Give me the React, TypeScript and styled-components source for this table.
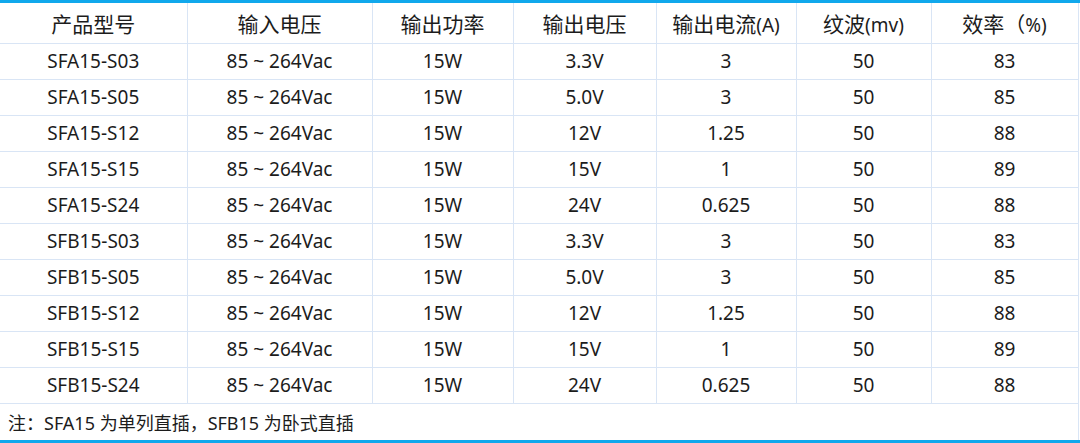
import React from "react";
import styled, { createGlobalStyle } from "styled-components";

const GlobalStyle = createGlobalStyle`
  html, body {
    margin: 0;
    padding: 0;
    background: #ffffff;
  }
  body {
    font-family: "Noto Sans", "Open Sans", "Noto Sans CJK SC", sans-serif;
    color: #1c1c1c;
  }
`;

const Frame = styled.div`
  width: 1080px;
  height: 443px;
  box-sizing: border-box;
  border-top: 3px solid #10a8ec;
  border-bottom: 3px solid #10a8ec;
  overflow: hidden;
`;

const Table = styled.table`
  width: 1078px;
  border-collapse: collapse;
  table-layout: fixed;
  font-size: 19px;
`;

const Cell = styled.td<{ $head?: boolean }>`
  height: ${(p) => (p.$head ? "39px" : "35px")};
  padding: 0;
  text-align: center;
  vertical-align: middle;
  border: 1px solid #d9e5f5;
  line-height: 1;
  white-space: nowrap;
  &:first-child {
    border-left: none;
  }
`;

const HeadRow = styled.tr`
  & > td {
    border-top: none;
    padding-top: 1px;
  }
`;

const NoteCell = styled.td`
  height: 37px;
  padding: 0 0 0 8px;
  text-align: left;
  vertical-align: middle;
  border: 1px solid #d9e5f5;
  border-left: none;
  border-bottom: none;
  font-size: 18px;
  line-height: 1;
  white-space: nowrap;
`;

// CJK glyphs in the header are a touch wider than the latin text
const Han = styled.span`
  font-family: "Noto Sans CJK SC", sans-serif;
  font-size: 21px;
`;

function Mixed({ text }: { text: string }) {
  const parts = text.split(/([\u3000-\u303f\u4e00-\u9fff\uff00-\uffef]+)/);
  return (
    <>
      {parts.map((p, i) =>
        /[\u3000-\u303f\u4e00-\u9fff\uff00-\uffef]/.test(p) ? <Han key={i}>{p}</Han> : p
      )}
    </>
  );
}

const widths = [187, 185, 141, 143, 140, 135, 147];
const headers = ["产品型号", "输入电压", "输出功率", "输出电压", "输出电流(A)", "纹波(mv)", "效率（%)"];

const rows: string[][] = [
  ["SFA15-S03", "3.3V", "3", "83"],
  ["SFA15-S05", "5.0V", "3", "85"],
  ["SFA15-S12", "12V", "1.25", "88"],
  ["SFA15-S15", "15V", "1", "89"],
  ["SFA15-S24", "24V", "0.625", "88"],
  ["SFB15-S03", "3.3V", "3", "83"],
  ["SFB15-S05", "5.0V", "3", "85"],
  ["SFB15-S12", "12V", "1.25", "88"],
  ["SFB15-S15", "15V", "1", "89"],
  ["SFB15-S24", "24V", "0.625", "88"],
];

export default function App() {
  return (
    <>
      <GlobalStyle />
      <Frame>
        <Table>
          <colgroup>
            {widths.map((w, i) => (
              <col key={i} style={{ width: w }} />
            ))}
          </colgroup>
          <tbody>
            <HeadRow>
              {headers.map((h) => (
                <Cell $head key={h}>
                  <Mixed text={h} />
                </Cell>
              ))}
            </HeadRow>
            {rows.map(([model, vout, iout, eff]) => (
              <tr key={model}>
                <Cell>{model}</Cell>
                <Cell>85 ~ 264Vac</Cell>
                <Cell>15W</Cell>
                <Cell>{vout}</Cell>
                <Cell>{iout}</Cell>
                <Cell>50</Cell>
                <Cell>{eff}</Cell>
              </tr>
            ))}
            <tr>
              <NoteCell colSpan={7}>注：SFA15 为单列直插，SFB15 为卧式直插</NoteCell>
            </tr>
          </tbody>
        </Table>
      </Frame>
    </>
  );
}
